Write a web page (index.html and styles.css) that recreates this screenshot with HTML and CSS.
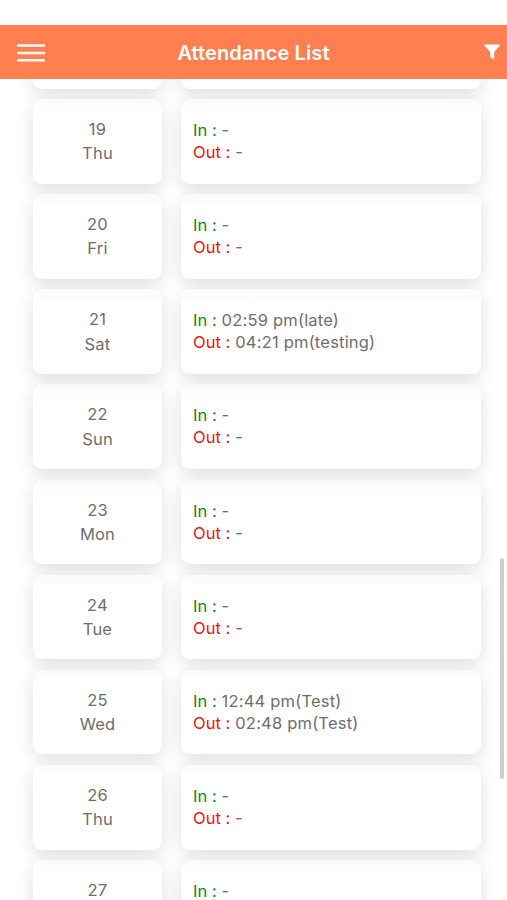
FILE: index.html
```
<!DOCTYPE html>
<html lang="en">
<head>
<meta charset="utf-8">
<title>Attendance List</title>
<link rel="stylesheet" href="styles.css">
</head>
<body>
<header class="bar">
  <svg class="menu" width="30" height="20" viewBox="0 0 30 20"><path d="M2 2.5H28M2 10H28M2 17.2H28" fill="none" stroke="#fff" stroke-width="2.4" stroke-linecap="round"/></svg>
  <h1 class="title">Attendance List</h1>
  <svg class="filter" width="16" height="16" viewBox="0 0 16 16"><path d="M.7.5H15.3Q16.200 1 15.600 1.800L10.200 8V14.800Q10 15.500 9.300 15.200L6.600 13.500Q6.200 13.200 6.200 12.700V8L.4 1.800Q-.2 1 .7.5Z" fill="#fff"/></svg>
</header>
<main class="list">
  <div class="row"><div class="card day"></div><div class="card times"></div></div>
  <div class="row"><div class="card day"><span>19</span><span>Thu</span></div><div class="card times"><p><b class="in">In :</b> -</p><p><b class="out">Out :</b> -</p></div></div>
  <div class="row"><div class="card day"><span>20</span><span>Fri</span></div><div class="card times"><p><b class="in">In :</b> -</p><p><b class="out">Out :</b> -</p></div></div>
  <div class="row"><div class="card day"><span>21</span><span>Sat</span></div><div class="card times"><p><b class="in">In :</b> 02:59 pm(late)</p><p><b class="out">Out :</b> 04:21 pm(testing)</p></div></div>
  <div class="row"><div class="card day"><span>22</span><span>Sun</span></div><div class="card times"><p><b class="in">In :</b> -</p><p><b class="out">Out :</b> -</p></div></div>
  <div class="row"><div class="card day"><span>23</span><span>Mon</span></div><div class="card times"><p><b class="in">In :</b> -</p><p><b class="out">Out :</b> -</p></div></div>
  <div class="row"><div class="card day"><span>24</span><span>Tue</span></div><div class="card times"><p><b class="in">In :</b> -</p><p><b class="out">Out :</b> -</p></div></div>
  <div class="row"><div class="card day"><span>25</span><span>Wed</span></div><div class="card times"><p><b class="in">In :</b> 12:44 pm(Test)</p><p><b class="out">Out :</b> 02:48 pm(Test)</p></div></div>
  <div class="row"><div class="card day"><span>26</span><span>Thu</span></div><div class="card times"><p><b class="in">In :</b> -</p><p><b class="out">Out :</b> -</p></div></div>
  <div class="row"><div class="card day"><span>27</span></div><div class="card times"><p><b class="in">In :</b> -</p></div></div>
  <div class="thumb"></div>
</main>
</body>
</html>
```
FILE: styles.css
```
* { box-sizing: border-box; }
body {
  margin: 0;
  padding-top: 25px;
  height: 900px;
  overflow: hidden;
  background: #fff;
  color: #6e6e6e;
  font: 16.5px/22px Inter, "Liberation Sans", sans-serif;
  letter-spacing: .2px;
}
.bar {
  height: 54px;
  padding: 0 7px 0 16px;
  display: grid;
  grid-template-columns: 38px 1fr 38px;
  align-items: center;
  background: #ff7f50;
  color: #fff;
}
.menu { margin-top: 1px; }
.title {
  margin: 0;
  padding-right: 9px;
  margin-top: 1px;
  text-align: center;
  font-size: 20px;
  font-weight: 600;
  letter-spacing: .1px;
  white-space: nowrap;
}
.filter { justify-self: end; margin-top: -1px; }
.list {
  position: relative;
  height: 821px;
  padding: 0 26px 0 33px;
  overflow: hidden;
}
.row {
  display: grid;
  grid-template-columns: 129px 300px;
  column-gap: 19px;
  height: 84.6px;
  margin-bottom: 10.55px;
}
.row:first-child { margin-top: -75.1px; }
.card {
  border-radius: 9px;
  background: linear-gradient(#fafafa, #fff 14px);
  box-shadow: 0 5px 18px rgba(0, 0, 0, .13);
}
.day {
  display: flex;
  flex-direction: column;
  align-items: center;
  padding-top: 18px;
  line-height: 24.3px;
}
.times { padding: 20px 12px; }
.times p { margin: 0; }
.times b { font-weight: 400; letter-spacing: .05px; }
.in { color: #078a12; }
.out { color: #ee1111; }
.thumb {
  position: absolute;
  top: 479px;
  right: 3px;
  width: 4px;
  height: 221px;
  border-radius: 2px;
  background: #cecece;
}
```
